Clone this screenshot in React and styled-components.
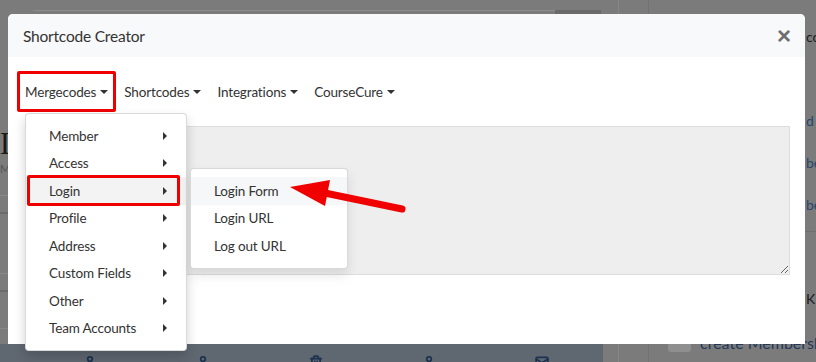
import React from "react";
import styled, { createGlobalStyle } from "styled-components";
import { User, Trash2, Mail } from "lucide-react";

const GlobalStyle = createGlobalStyle`
  * { box-sizing: border-box; }
  body {
    margin: 0;
    font-family: Lato, "Liberation Sans", sans-serif;
  }
`;

const mergecodes = [
  "Member",
  "Access",
  "Login",
  "Profile",
  "Address",
  "Custom Fields",
  "Other",
  "Team Accounts",
];

const loginCodes = ["Login Form", "Login URL", "Log out URL"];

const navItems = ["Mergecodes", "Shortcodes", "Integrations", "CourseCure"];

const App = () => {
  return (
    <>
      <GlobalStyle />
      <Screen>
        <Backdrop>
          <MainCol>
            <TopBar>
              <SearchField />
              <SearchButton />
            </TopBar>
            <LeftStub>
              <BigHeading>L</BigHeading>
              <SmallCaption>M</SmallCaption>
              <StubRule $top={19} />
              <StubRule $top={16} $dark />
              <StubRule $top={59} />
              <StubRule $top={16} $dark />
              <StubRule $top={36} />
            </LeftStub>
            <BottomBand>
              <User size={14} strokeWidth={3} />
              <User size={14} strokeWidth={3} />
              <Trash2 size={14} strokeWidth={3} />
              <User size={14} strokeWidth={3} />
              <Mail size={14} strokeWidth={3} />
            </BottomBand>
          </MainCol>
          <Gutter />
          <Sidebar>
            <SideHeading>cc</SideHeading>
            <SideLink $gap={66}>d</SideLink>
            <SideLink $gap={24}>be</SideLink>
            <SideLink $gap={24}>be</SideLink>
            <SideRule />
            <SideHeading $gap={58}>K</SideHeading>
            <CheckRow>
              <CheckBox />
              <span>create Membership</span>
            </CheckRow>
          </Sidebar>
        </Backdrop>

        <Modal>
          <Header>
            <Title>Shortcode Creator</Title>
            <Close>×</Close>
          </Header>
          <Body>
            <Nav>
              {navItems.map((item, i) => (
                <NavItem key={item} $marked={i === 0}>
                  {item}
                  <DownCaret />
                  {i === 0 && (
                    <Menu>
                      {mergecodes.map((code) => (
                        <MenuItem
                          key={code}
                          $active={code === "Login"}
                          $marked={code === "Login"}
                        >
                          {code}
                          <RightCaret />
                          {code === "Login" && (
                            <SubMenu>
                              {loginCodes.map((c, j) => (
                                <SubItem key={c} $active={j === 0}>
                                  {c}
                                </SubItem>
                              ))}
                            </SubMenu>
                          )}
                        </MenuItem>
                      ))}
                    </Menu>
                  )}
                </NavItem>
              ))}
            </Nav>
            <CodeArea readOnly defaultValue="" />
          </Body>
        </Modal>

        <Pointer width="140" height="50" viewBox="0 0 140 50">
          <line
            x1="40"
            y1="22"
            x2="122"
            y2="39"
            stroke="#f00000"
            strokeWidth="7"
            strokeLinecap="round"
          />
          <polygon points="10,17 50,10 45,36" fill="#f00000" />
        </Pointer>
      </Screen>
    </>
  );
};

const Screen = styled.div`
  position: relative;
  width: 816px;
  height: 362px;
  overflow: hidden;
  background: #7b7b7b;
`;

/* dimmed page behind the modal */
const Backdrop = styled.div`
  display: grid;
  grid-template-columns: 618px 31px 1fr;
  height: 100%;
`;

const MainCol = styled.div`
  display: flex;
  flex-direction: column;
`;

const TopBar = styled.div`
  height: 14px;
  display: flex;
  padding: 10px 0 0 33px;
`;

const SearchField = styled.div`
  width: 522px;
  border-top: 1px solid #8c8c8c;
`;

const SearchButton = styled.div`
  width: 46px;
  background: #6a6a6a;
`;

const LeftStub = styled.div`
  flex: 1;
  display: flex;
  flex-direction: column;
  padding-top: 112px;
`;

const BigHeading = styled.div`
  font-family: "Liberation Serif", serif;
  font-size: 31px;
  line-height: 36px;
  color: #1a1a1a;
`;

const SmallCaption = styled.div`
  font-size: 11px;
  line-height: 14px;
  color: #555;
  letter-spacing: 1px;
`;

const StubRule = styled.div`
  margin-top: ${(p) => p.$top}px;
  border-top: ${(p) => (p.$dark ? "2px solid #6a6a6a" : "1px solid #888")};
`;

const BottomBand = styled.div`
  height: 18px;
  margin-right: 15px;
  background: #5f6771;
  display: flex;
  gap: 99px;
  padding: 11px 0 0 83px;
  color: #1b3250;
  overflow: hidden;
`;

const Gutter = styled.div`
  border-left: 1px solid #868686;
  border-right: 1px solid #717171;
`;

const Sidebar = styled.div`
  display: flex;
  flex-direction: column;
  padding-top: 28px;
  font-size: 15px;
`;

const SideHeading = styled.div`
  margin-top: ${(p) => p.$gap || 0}px;
  padding-left: 157px;
  line-height: 18px;
  font-size: 14px;
  color: #1c1c1c;
  white-space: nowrap;
`;

const SideLink = styled.div`
  margin-top: ${(p) => p.$gap}px;
  padding-left: 157px;
  line-height: 18px;
  font-size: 14px;
  color: #27466a;
`;

const SideRule = styled.div`
  margin-top: 17px;
  border-top: 1px solid #6e6e6e;
`;

const CheckRow = styled.div`
  margin-top: 24px;
  padding-left: 19px;
  display: flex;
  align-items: center;
  gap: 9px;
  color: #22395a;
  white-space: nowrap;
  font-size: 16px;
`;

const CheckBox = styled.div`
  width: 23px;
  height: 20px;
  flex: none;
  border-radius: 3px;
  background: #8f8f8f;
`;

/* modal dialog lying over the page */
const Modal = styled.div`
  position: absolute;
  left: 8px;
  top: 14px;
  width: 797px;
  height: 330px;
  background: #fff;
  border-radius: 5px 5px 0 0;
  display: flex;
  flex-direction: column;
`;

const Header = styled.div`
  height: 43px;
  flex: none;
  display: flex;
  align-items: center;
  justify-content: space-between;
  padding: 0 14px 0 15px;
  background: #f8f9fa;
  border-radius: 5px 5px 0 0;
`;

const Title = styled.div`
  font-size: 15.5px;
  letter-spacing: -0.2px;
  color: #333;
`;

const Close = styled.button`
  border: 0;
  background: none;
  padding: 0;
  font-family: "Liberation Sans", sans-serif;
  font-size: 24px;
  font-weight: 700;
  line-height: 1;
  color: #6e6e6e;
`;

const Body = styled.div`
  position: relative;
  padding: 14px 15px 0;
  font-size: 13.5px;
  letter-spacing: -0.15px;
  color: #333;
`;

const Nav = styled.div`
  display: flex;
  margin-left: -6px;
  height: 41px;
`;

const NavItem = styled.div`
  position: relative;
  display: flex;
  align-items: center;
  gap: 4px;
  padding: 0 5px;
  border: 3px solid ${(p) => (p.$marked ? "#ee0000" : "transparent")};
  border-radius: 2px;
  white-space: nowrap;
`;

const DownCaret = styled.span`
  width: 0;
  height: 0;
  border-top: 4px solid #333;
  border-left: 4px solid transparent;
  border-right: 4px solid transparent;
`;

const RightCaret = styled.span`
  width: 0;
  height: 0;
  border-left: 4px solid #333;
  border-top: 4px solid transparent;
  border-bottom: 4px solid transparent;
`;

const Menu = styled.div`
  position: absolute;
  top: 39px;
  left: 5px;
  z-index: 5;
  width: 162px;
  padding: 8px 0;
  background: #fff;
  border: 1px solid rgba(0, 0, 0, 0.15);
  border-radius: 4px;
  box-shadow: 0 6px 12px rgba(0, 0, 0, 0.175);
`;

const MenuItem = styled.div`
  position: relative;
  display: flex;
  align-items: center;
  justify-content: space-between;
  height: 27.5px;
  padding: 0 19px 0 23px;
  background: ${(p) => (p.$active ? "#f3f3f3" : "transparent")};

  ${(p) =>
    p.$marked &&
    `
    &::after {
      content: "";
      position: absolute;
      left: 1px;
      right: 6px;
      top: -2px;
      bottom: -1px;
      border: 3px solid #ee0000;
      border-radius: 2px;
    }
  `}
`;

const SubMenu = styled.div`
  position: absolute;
  left: calc(100% + 4px);
  top: -9px;
  width: 158px;
  padding: 8px 0;
  background: #fff;
  border: 1px solid rgba(0, 0, 0, 0.15);
  border-radius: 4px;
  box-shadow: 0 6px 12px rgba(0, 0, 0, 0.1);
`;

const SubItem = styled.div`
  display: flex;
  align-items: center;
  height: 27.5px;
  padding-left: 23px;
  background: ${(p) => (p.$active ? "#f6f7f8" : "transparent")};
`;

const CodeArea = styled.textarea`
  display: block;
  margin: 14px 0 0 8px;
  width: calc(100% - 8px);
  height: 149px;
  background: #eee;
  border: 1px solid #ddd;
  resize: vertical;
  outline: none;
`;

const Pointer = styled.svg`
  position: absolute;
  left: 280px;
  top: 170px;
  z-index: 10;
`;

export default App;
